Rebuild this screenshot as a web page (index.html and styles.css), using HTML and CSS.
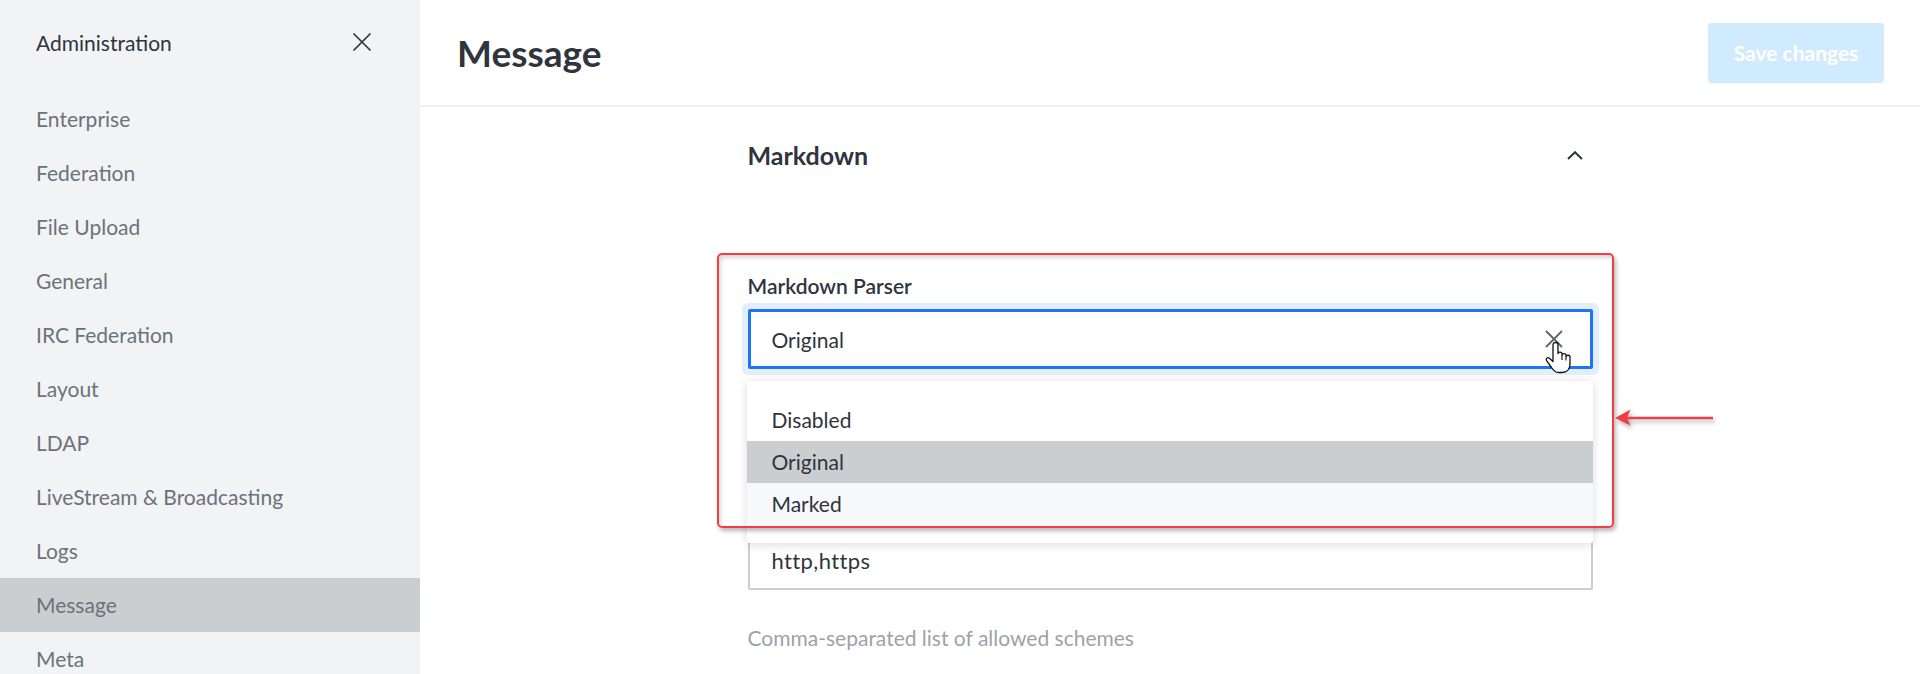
FILE: index.html
```html
<!DOCTYPE html>
<html lang="en">
<head>
<meta charset="utf-8">
<title>Administration - Message</title>
<link rel="stylesheet" href="styles.css">
</head>
<body>
<div class="app">
  <aside class="sidebar">
    <div class="sidebar-header">
      <span class="sidebar-title">Administration</span>
      <span class="close-btn">
        <svg width="20" height="20" viewBox="0 0 20 20"><path d="M1.5 1.5 L18.5 18.5 M18.5 1.5 L1.5 18.5" stroke="#2f343d" stroke-width="1.7" fill="none"/></svg>
      </span>
    </div>
    <nav class="nav">
      <a class="nav-item">Enterprise</a>
      <a class="nav-item">Federation</a>
      <a class="nav-item">File Upload</a>
      <a class="nav-item">General</a>
      <a class="nav-item">IRC Federation</a>
      <a class="nav-item">Layout</a>
      <a class="nav-item">LDAP</a>
      <a class="nav-item">LiveStream &amp; Broadcasting</a>
      <a class="nav-item">Logs</a>
      <a class="nav-item active">Message</a>
      <a class="nav-item">Meta</a>
    </nav>
  </aside>
  <main class="main">
    <header class="page-header">
      <h1 class="page-title">Message</h1>
      <button class="save-btn">Save changes</button>
    </header>
    <div class="content">
      <section class="section">
        <div class="section-header">
          <h2 class="section-title">Markdown</h2>
          <svg class="chevron" width="16" height="9" viewBox="0 0 16 9"><path d="M1 8 L8 1.2 L15 8" stroke="#2f343d" stroke-width="2" fill="none"/></svg>
        </div>
        <div class="field field-parser">
          <label class="field-label">Markdown Parser</label>
          <div class="select-wrap">
            <div class="select">
              <span class="select-value">Original</span>
              <svg class="clear-icon" width="18" height="18" viewBox="0 0 18 18"><path d="M1 1 L17 17 M17 1 L1 17" stroke="#5f646c" stroke-width="1.8" fill="none"/></svg>
            </div>
            <ul class="dropdown">
              <li class="option">Disabled</li>
              <li class="option selected">Original</li>
              <li class="option hovered">Marked</li>
            </ul>
          </div>
        </div>
        <div class="field field-schemes">
          <div class="text-input">http,https</div>
          <p class="hint">Comma-separated list of allowed schemes</p>
        </div>
      </section>
    </div>
  </main>
</div>
<div class="annotation-box"></div>
<svg class="annotation-arrow" width="110" height="30" viewBox="0 0 110 30">
  <path d="M15 15 H101" stroke="#f03e42" stroke-width="2.4" fill="none"/>
  <path d="M3 15 L18.5 6.5 L15 15 L18.5 22.5 Z" fill="#f03e42"/>
</svg>
<svg class="cursor" width="32" height="36" viewBox="0 0 32 36">
  <path d="M10 4.5 C10 1.8 15 1.8 15 4.5 V13.5 C15 11.6 19 11.6 19 13.5 V15 C19 13.2 23 13.2 23 15 V16.5 C23 14.8 27 14.8 27 16.5 V24 C27 29 24 32.5 19 32.5 H15.5 C12.5 32.5 10.5 30.5 8.5 27.5 L3.6 20.6 C2.4 18.8 4.4 16.6 6.4 18.2 L10 21.5 Z" fill="#ffffff" stroke="#111" stroke-width="1.3" stroke-linejoin="round"/>
  <path d="M19 15 V20 M23 16.5 V20.5" stroke="#111" stroke-width="1.1" fill="none"/>
</svg>
</body>
</html>
```

FILE: styles.css
```css
* { box-sizing: border-box; }

html, body {
  margin: 0;
  padding: 0;
  width: 1920px;
  height: 674px;
  overflow: hidden;
  background: #ffffff;
  font-family: "Lato", "Open Sans", "Liberation Sans", sans-serif;
  color: #2f343d;
}

body { position: relative; }

.app {
  display: flex;
  height: 674px;
  overflow: hidden;
}

/* Sidebar */
.sidebar {
  width: 420px;
  flex: 0 0 420px;
  background: #f2f3f5;
  display: flex;
  flex-direction: column;
  overflow: hidden;
}

.sidebar-header {
  height: 84px;
  flex: 0 0 84px;
  display: flex;
  align-items: center;
  justify-content: space-between;
  padding: 0 48px 0 36px;
}

.sidebar-title {
  font-size: 21px;
  color: #2f343d;
}

.close-btn {
  display: flex;
  width: 20px;
  height: 20px;
}

.nav {
  display: flex;
  flex-direction: column;
  flex: 0 0 auto;
  padding-top: 8px;
}

.nav-item {
  display: block;
  flex: 0 0 54px;
  height: 54px;
  line-height: 54px;
  padding-left: 36px;
  font-size: 21px;
  color: #6c727a;
  text-decoration: none;
}

.nav-item.active {
  background: #cbced1;
}

/* Main */
.main {
  flex: 1;
  display: flex;
  flex-direction: column;
}

.page-header {
  height: 107px;
  flex: 0 0 107px;
  border-bottom: 2px solid #eff0f2;
  display: flex;
  align-items: center;
  justify-content: space-between;
  padding: 0 36px 0 37px;
}

.page-title {
  margin: 0;
  font-size: 37px;
  font-weight: 700;
  color: #2f343d;
}

.save-btn {
  width: 176px;
  height: 60px;
  border: none;
  border-radius: 4px;
  background: #d1ebfe;
  color: #ffffff;
  font-family: inherit;
  font-size: 21px;
  font-weight: 700;
}

.content {
  padding-top: 18px;
}

.section {
  width: 845px;
  margin: 0 auto;
}

.section-header {
  height: 60px;
  display: flex;
  align-items: center;
  justify-content: space-between;
  padding-right: 10px;
}

.section-title {
  margin: 0;
  font-size: 25px;
  font-weight: 700;
  color: #2f343d;
}

.field-parser {
  margin-top: 86px;
}

.field-label {
  display: block;
  height: 30px;
  line-height: 30px;
  font-size: 21px;
  font-weight: 600;
  color: #2f343d;
  margin-bottom: 8px;
}

.select-wrap {
  position: relative;
}

.select {
  height: 60px;
  border: 3px solid #1d74f5;
  border-radius: 2px;
  box-shadow: 0 0 0 6px #e3eefd;
  display: flex;
  align-items: center;
  justify-content: space-between;
  padding: 0 27px 0 21px;
  background: #fff;
}

.select-value {
  font-size: 21px;
  color: #2f343d;
}

.clear-icon { display: block; }

.dropdown {
  position: absolute;
  left: -1px;
  right: 0;
  top: 72px;
  margin: 0;
  padding: 18px 0;
  list-style: none;
  background: #ffffff;
  border-radius: 2px;
  box-shadow: 0 0 10px rgba(47, 52, 61, 0.12), 0 4px 8px rgba(47, 52, 61, 0.06);
  z-index: 2;
}

.option {
  height: 42px;
  line-height: 42px;
  padding-left: 25px;
  font-size: 21px;
  color: #2f343d;
}

.option.selected { background: #cbced1; }
.option.hovered { background: #f7f8fa; }

.field-schemes {
  margin-top: 161px;
}

.text-input {
  height: 60px;
  border: 2.5px solid #cbced1;
  border-radius: 2px;
  padding: 0 22px;
  display: flex;
  align-items: center;
  font-size: 22px;
  letter-spacing: 0.4px;
  color: #2f343d;
}

.hint {
  margin: 33px 0 0;
  line-height: 30px;
  font-size: 21px;
  color: #9ea2a8;
}

/* Annotation overlays */
.annotation-box {
  position: absolute;
  left: 717px;
  top: 253px;
  width: 897px;
  height: 275px;
  border: 2px solid #f03e42;
  border-radius: 5px;
  box-shadow: 2px 3px 4px rgba(0, 0, 0, 0.28), inset 2px 3px 4px rgba(0, 0, 0, 0.16);
  z-index: 5;
  pointer-events: none;
}

.annotation-arrow {
  position: absolute;
  left: 1612px;
  top: 403px;
  filter: drop-shadow(2px 3px 2px rgba(0, 0, 0, 0.3));
  z-index: 5;
}

.cursor {
  position: absolute;
  left: 1543px;
  top: 340px;
  z-index: 6;
}
```
